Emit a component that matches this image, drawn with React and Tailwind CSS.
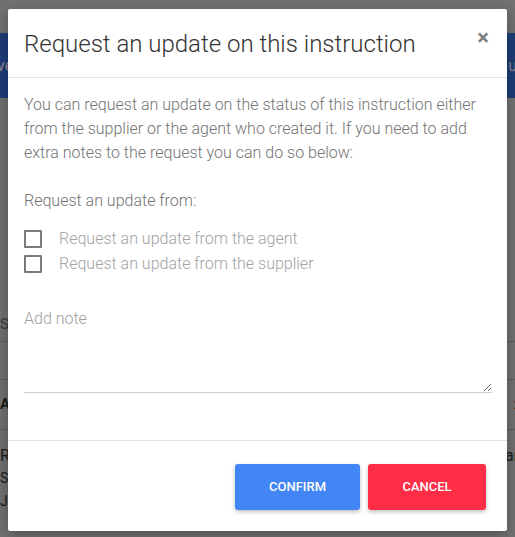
const Checkbox = ({ label }) => (
  <label className="flex items-center h-[25px]">
    <span className="w-[18px] h-[18px] border-2 border-[#7a7a7a] rounded-[1px] mr-[17px] shrink-0"></span>
    <span className="text-[#a2a2a2]">{label}</span>
  </label>
);

const App = () => {
  return (
    <div
      className="relative w-[515px] h-[537px] overflow-hidden bg-[#727272]"
      style={{ fontFamily: 'Roboto, "Liberation Sans", sans-serif' }}
    >
      {/* page behind the dimmed overlay */}
      <div className="pt-[33px] text-[15px] text-[#1b1b1b]">
        <div className="h-[65px] bg-[#1e3d78] flex items-center justify-between text-[#8a8a8a] text-[16px]">
          <span className="-ml-[3px]">ve</span>
          <span className="-mr-[2px]">u</span>
        </div>
        <div className="h-[209px]"></div>
        <div className="h-[35px] flex items-center justify-between border-b border-[#5e5e5e]">
          <span className="text-[#3a3a3a]">Su</span>
          <span></span>
        </div>
        <div className="h-[38px] border-b border-[#5e5e5e]"></div>
        <div className="h-[50px] flex items-center justify-between border-b border-[#5e5e5e]">
          <span className="font-bold">A</span>
          <span className="-mr-[2px]">:</span>
        </div>
        <div className="flex justify-between pt-[14px]">
          <div className="leading-[23px]">
            <div className="text-[16px]">R</div>
            <div className="text-[14px]">Sc</div>
            <div className="text-[14px]">Je</div>
          </div>
          <span className="text-[16px] -mr-[4px]">ar</span>
        </div>
      </div>

      {/* modal */}
      <div className="absolute left-[8px] top-[9px] w-[499px] h-[522px] bg-white rounded-[2px] shadow-[0_4px_16px_rgba(0,0,0,0.3)] flex flex-col">
        <div className="h-[69px] shrink-0 flex items-center justify-between pl-[16px] pr-[16px] border-b border-[#e2e2e2]">
          <h2 className="text-[24px] font-light text-[#333] pt-[1px]">Request an update on this instruction</h2>
          <button className="text-[22px] font-bold text-[#808080] leading-none -mt-[10px] mr-[2px]">×</button>
        </div>

        <div className="flex-1 px-[16px] pt-[15px] text-[16px] leading-[24px] font-light text-[#737373]">
          <p>
            You can request an update on the status of this instruction either from the supplier or the agent who created
            it. If you need to add extra notes to the request you can do so below:
          </p>
          <p className="mt-[24px]">Request an update from:</p>
          <div className="mt-[13px]">
            <Checkbox label="Request an update from the agent" />
            <Checkbox label="Request an update from the supplier" />
          </div>
          <textarea
            placeholder="Add note"
            className="block mt-[29px] w-[468px] h-[88px] pt-[2px] border-b border-[#d0d0d0] outline-none resize-y placeholder:text-[#a0a0a0] text-[16px] font-light"
          ></textarea>
        </div>

        <div className="h-[91px] shrink-0 border-t border-[#e2e2e2] flex items-start justify-end gap-[8px] pt-[23px] pr-[21px]">
          <button className="w-[125px] h-[46px] rounded-[3px] bg-[#4285f4] text-white text-[13px] font-medium shadow-[0_2px_4px_rgba(0,0,0,0.25)]">
            CONFIRM
          </button>
          <button className="w-[118px] h-[46px] rounded-[3px] bg-[#ff2d46] text-white text-[13px] font-medium shadow-[0_2px_4px_rgba(0,0,0,0.25)]">
            CANCEL
          </button>
        </div>
      </div>
    </div>
  );
};

export default App;
